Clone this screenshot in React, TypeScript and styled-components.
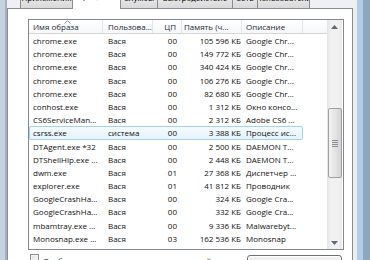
import React from "react";
import styled, { createGlobalStyle, css } from "styled-components";

const Global = createGlobalStyle`
  html, body { margin: 0; padding: 0; width: 370px; height: 260px; overflow: hidden; background: #f0f0f0; }
  body { font-family: "Open Sans", "DejaVu Sans", sans-serif; font-size: 8px; color: #111; }
  * { box-sizing: border-box; }
`;

type ColKey = "name" | "user" | "cpu" | "mem" | "desc" | "fill";
const COLS: Record<ColKey, { w: number; align: "left" | "right"; pl: number; pr: number }> = {
  name: { w: 74, align: "left", pl: 4, pr: 2 },
  user: { w: 50, align: "left", pl: 5, pr: 2 },
  cpu: { w: 29, align: "right", pl: 2, pr: 5 },
  mem: { w: 60, align: "right", pl: 2, pr: 1 },
  desc: { w: 61, align: "left", pl: 4, pr: 2 },
  fill: { w: 24, align: "left", pl: 0, pr: 0 },
};

const Window = styled.div`
  display: flex;
  width: 370px;
  height: 260px;
  overflow: hidden;
`;

const FrameLeft = styled.div`
  flex: none;
  width: 7px;
  background: linear-gradient(to right, #c6d2df 0 5px, #a3b1c1 5px 7px);
`;

const FrameRight = styled.div`
  flex: none;
  width: 17px;
  background: linear-gradient(to right, #eceef0 0 4px, #b1cdea 4px 10px, #90a6bd 10px);
`;

const Main = styled.div`
  flex: 1;
  min-width: 0;
  display: flex;
  flex-direction: column;
`;

const TabStrip = styled.div`
  flex: none;
  height: 9px;
  display: flex;
  align-items: flex-end;
  padding-left: 14px;
  overflow: hidden;
  background: #eef0f3;
  box-shadow: inset 0 -1px 0 #898c95;
`;

const Tab = styled.div<{ $w: number; $active?: boolean }>`
  flex: none;
  width: ${(p) => p.$w}px;
  height: 20px;
  margin-left: -1px;
  margin-bottom: 1px;
  border: 1px solid #898c95;
  border-bottom: none;
  border-radius: 2px 2px 0 0;
  background: linear-gradient(#f3f3f3, #e6e6e6 50%, #d9d9d9);
  display: flex;
  align-items: flex-end;
  justify-content: center;
  padding-bottom: 5px;
  line-height: 10px;
  white-space: nowrap;
  overflow: hidden;
  color: #000;
  ${(p) =>
    p.$active &&
    css`
      position: relative;
      z-index: 1;
      height: 22px;
      margin-bottom: 0;
      padding-bottom: 8px;
      background: #fff;
    `}
`;

const Panel = styled.div`
  flex: 1;
  display: flex;
  flex-direction: column;
  background: #fff;
  border-left: 1px solid #898c95;
  border-right: 1px solid #898c95;
  padding: 10px 8px 0 20px;
  overflow: hidden;
`;

const List = styled.div`
  flex: none;
  height: 231px;
  display: flex;
  border: 1px solid #828790;
  background: #fff;
`;

const Content = styled.div`
  width: 298px;
  flex: none;
  display: flex;
  flex-direction: column;
  overflow: hidden;
`;

const Header = styled.div`
  flex: none;
  height: 14px;
  display: flex;
  border-bottom: 1px solid #d5d5d5;
  background: linear-gradient(#ffffff, #f6f7f9);
`;

const HeadCell = styled.div<{ $col: ColKey }>`
  position: relative;
  flex: none;
  width: ${(p) => COLS[p.$col].w}px;
  padding: 0 ${(p) => COLS[p.$col].pr}px 0 ${(p) => COLS[p.$col].pl}px;
  text-align: ${(p) => (p.$col === "cpu" ? "right" : "left")};
  line-height: 13px;
  white-space: nowrap;
  overflow: hidden;
  color: #1e2a3a;
  border-right: ${(p) => (p.$col === "fill" ? "none" : "1px solid #e2e5ea")};
`;

const SortMark = styled.svg`
  position: absolute;
  top: 0;
  left: 35px;
`;

const Body = styled.div`
  flex: 1;
  overflow: hidden;
`;

const Row = styled.div<{ $selected?: boolean }>`
  width: 274px;
  height: 13.2px;
  display: flex;
  border-radius: 2px;
  ${(p) =>
    p.$selected &&
    css`
      background: linear-gradient(#f6fbfe, #e5f2fb);
      box-shadow: inset 0 0 0 1px #a6d2f0;
    `}
`;

const Cell = styled.div<{ $col: ColKey }>`
  flex: none;
  width: ${(p) => COLS[p.$col].w}px;
  padding: 0 ${(p) => COLS[p.$col].pr}px 0 ${(p) => COLS[p.$col].pl}px;
  text-align: ${(p) => COLS[p.$col].align};
  line-height: 13.2px;
  white-space: nowrap;
  overflow: hidden;
`;

const Scroll = styled.div`
  flex: none;
  width: 15px;
  display: flex;
  flex-direction: column;
  background: linear-gradient(to right, #e4e4e4, #f1f1f1 25%, #f1f1f1 75%, #e9e9e9);
`;

const ScrollBtn = styled.div`
  flex: none;
  height: 13px;
  display: flex;
  align-items: center;
  justify-content: center;
`;

const Track = styled.div`
  flex: 1;
  display: flex;
  flex-direction: column;
  align-items: stretch;
`;

const Thumb = styled.div<{ $top: number; $h: number }>`
  margin: ${(p) => p.$top}px 0 0 1px;
  width: 14px;
  height: ${(p) => p.$h}px;
  border: 1px solid #a0a0a0;
  border-radius: 2px;
  background: linear-gradient(to right, #f2f2f2, #e4e4e4 50%, #d4d4d4);
  display: flex;
  flex-direction: column;
  align-items: center;
  justify-content: center;
  gap: 1px;
`;

const Grip = styled.div`
  width: 6px;
  height: 1px;
  background: #8d8d8d;
`;

const BottomBar = styled.div`
  flex: none;
  display: flex;
  justify-content: space-between;
  align-items: flex-start;
  margin-top: 4px;
  padding: 0 2px;
`;

const CheckLabel = styled.label`
  display: flex;
  align-items: flex-start;
  gap: 4px;
  line-height: 10px;
  white-space: nowrap;
`;

const CheckText = styled.span`
  margin-top: 2px;
`;

const CheckBox = styled.span`
  flex: none;
  width: 9px;
  height: 9px;
  border: 1px solid #8f8f8f;
  background: linear-gradient(135deg, #dcdcdc, #ffffff);
  box-shadow: inset 0 0 0 1px #f4f4f4;
`;

const Button = styled.div`
  margin-top: 1px;
  width: 95px;
  height: 20px;
  border: 1px solid #707070;
  border-radius: 3px;
  background: linear-gradient(#f2f2f2, #ebebeb 45%, #dddddd 50%, #cfcfcf);
  box-shadow: inset 0 0 0 1px #fcfcfc;
  text-align: center;
  line-height: 18px;
`;

const Arrow = ({ up }: { up?: boolean }) => (
  <svg width="7" height="4" viewBox="0 0 7 4">
    <polygon points={up ? "0,4 3.5,0 7,4" : "0,0 3.5,4 7,0"} fill="#606a78" />
  </svg>
);

const rows: [string, string, string, string, string][] = [
  ["chrome.exe", "Вася", "00", "105 596 КБ", "Google Chr..."],
  ["chrome.exe", "Вася", "00", "149 772 КБ", "Google Chr..."],
  ["chrome.exe", "Вася", "00", "340 424 КБ", "Google Chr..."],
  ["chrome.exe", "Вася", "00", "106 276 КБ", "Google Chr..."],
  ["chrome.exe", "Вася", "00", "82 680 КБ", "Google Chr..."],
  ["conhost.exe", "Вася", "00", "1 312 КБ", "Окно консо..."],
  ["CS6ServiceMan...", "Вася", "00", "2 312 КБ", "Adobe CS6 ..."],
  ["csrss.exe", "система", "00", "3 388 КБ", "Процесс ис..."],
  ["DTAgent.exe *32", "Вася", "00", "2 500 КБ", "DAEMON T..."],
  ["DTShellHlp.exe ...", "Вася", "00", "2 448 КБ", "DAEMON T..."],
  ["dwm.exe", "Вася", "01", "27 368 КБ", "Диспетчер ..."],
  ["explorer.exe", "Вася", "01", "41 812 КБ", "Проводник"],
  ["GoogleCrashHa...", "Вася", "00", "324 КБ", "Google Cra..."],
  ["GoogleCrashHa...", "Вася", "00", "332 КБ", "Google Cra..."],
  ["mbamtray.exe ...", "Вася", "00", "9 336 КБ", "Malwarebyt..."],
  ["Monosnap.exe ...", "Вася", "03", "162 536 КБ", "Monosnap"],
  ["notepad.exe", "Вася", "00", "1 776 КБ", "Блокнот"],
];

const tabs: [string, number][] = [
  ["Приложения", 53],
  ["Процессы", 49],
  ["Службы", 38],
  ["Быстродействие", 76],
  ["Сеть", 26],
  ["Пользователи", 53],
];

const keys: ColKey[] = ["name", "user", "cpu", "mem", "desc"];

export default function App() {
  return (
    <>
      <Global />
      <Window>
        <FrameLeft />
        <Main>
          <TabStrip>
            {tabs.map(([t, w], i) => (
              <Tab key={t} $w={w} $active={i === 1}>
                {t}
              </Tab>
            ))}
          </TabStrip>
          <Panel>
            <List>
              <Content>
                <Header>
                  <HeadCell $col="name">
                    Имя образа
                    <SortMark width="7" height="4" viewBox="0 0 7 4">
                      <polyline points="0.5,3.5 3.5,0.8 6.5,3.5" fill="none" stroke="#7f8ea4" strokeWidth="1" />
                    </SortMark>
                  </HeadCell>
                  <HeadCell $col="user">Пользова...</HeadCell>
                  <HeadCell $col="cpu">ЦП</HeadCell>
                  <HeadCell $col="mem">Память (ч...</HeadCell>
                  <HeadCell $col="desc">Описание</HeadCell>
                  <HeadCell $col="fill" />
                </Header>
                <Body>
                  {rows.map((r, i) => (
                    <Row key={i} $selected={i === 7}>
                      {keys.map((k, j) => (
                        <Cell key={k} $col={k}>
                          {r[j]}
                        </Cell>
                      ))}
                    </Row>
                  ))}
                </Body>
              </Content>
              <Scroll>
                <ScrollBtn>
                  <Arrow up />
                </ScrollBtn>
                <Track>
                  <Thumb $top={75} $h={70}>
                    <Grip />
                    <Grip />
                    <Grip />
                    <Grip />
                  </Thumb>
                </Track>
                <ScrollBtn>
                  <Arrow />
                </ScrollBtn>
              </Scroll>
            </List>
            <BottomBar>
              <CheckLabel>
                <CheckBox />
                <CheckText>Отображать процессы всех пользователей</CheckText>
              </CheckLabel>
              <Button>Завершить процесс</Button>
            </BottomBar>
          </Panel>
        </Main>
        <FrameRight />
      </Window>
    </>
  );
}
